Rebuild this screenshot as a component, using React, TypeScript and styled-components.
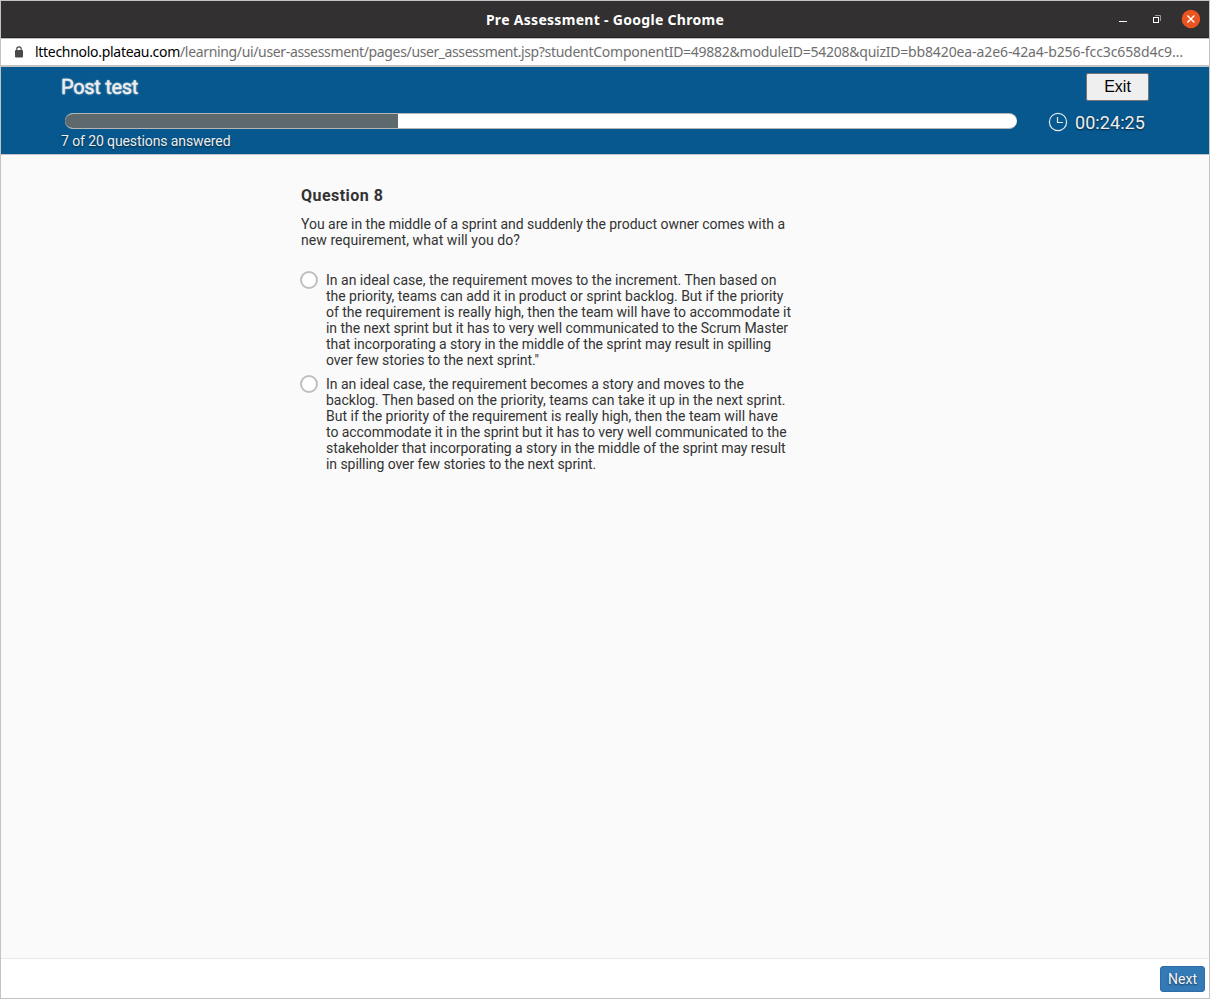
import React from "react";
import styled, { createGlobalStyle } from "styled-components";

const Global = createGlobalStyle`
  * { box-sizing: border-box; }
  body { margin: 0; background: #fff; }
`;

const Window = styled.div`
  display: flex;
  flex-direction: column;
  width: 1210px;
  height: 999px;
  border: 1px solid #c3c3c3;
  background: #fafafa;
  font-family: Roboto, "Liberation Sans", sans-serif;
  font-size: 14px;
  line-height: 16px;
  color: #333;
`;

const TitleBar = styled.div`
  display: grid;
  grid-template-columns: 1fr auto 1fr;
  align-items: center;
  height: 37px;
  flex: none;
  background: #323030;
  border-bottom: 1px solid #222;
`;

const WindowTitle = styled.div`
  grid-column: 2;
  color: #fff;
  font: bold 14px/20px "Noto Sans", sans-serif;
  letter-spacing: 0.3px;
  padding-top: 1px;
`;

const WindowButtons = styled.div`
  display: flex;
  justify-content: flex-end;
  align-items: center;
  padding-right: 9px;
`;

const AddressBar = styled.div`
  display: flex;
  align-items: center;
  height: 29px;
  flex: none;
  padding: 0 0 0 13px;
  background: #fff;
  border-top: 1px solid #c3c3c3;
  border-bottom: 2px solid #c3c3c3;
`;

const Url = styled.div`
  display: flex;
  margin-left: 11px;
  font: 14px/20px "Noto Sans", sans-serif;
  white-space: nowrap;
`;

const Host = styled.span`
  color: #000;
  letter-spacing: -0.296px;
`;

const Path = styled.span<{ $spacing: number }>`
  color: #6e6e6e;
  letter-spacing: ${(p) => p.$spacing}px;
`;

const Header = styled.header`
  display: flex;
  justify-content: space-between;
  height: 88px;
  flex: none;
  padding: 6px 60px 0;
  background: #07588e;
  border-bottom: 1px solid #c3c3c3;
  color: #eee;
`;

const Progress = styled.div`
  display: flex;
  flex-direction: column;
`;

const TestName = styled.h1`
  margin: 2px 0 0;
  font-size: 20px;
  font-weight: 400;
  line-height: 24px;
  letter-spacing: -0.31px;
  -webkit-text-stroke: 0.3px #eee;
  text-shadow: 0 0 2px rgba(255, 255, 255, 0.8);
`;

const Track = styled.div`
  width: 952px;
  height: 16px;
  margin: 14px 0 0 4px;
  overflow: hidden;
  border: solid #b5b5b5;
  border-width: 1px 0;
  border-radius: 8px;
  background: #fff;
`;

const Fill = styled.div`
  height: 16px;
  margin-top: -1px;
  background: #5e696e;
`;

const Answered = styled.div`
  margin-top: 4px;
  letter-spacing: -0.1px;
  text-shadow: 0 1px 2px rgba(0, 0, 0, 0.6);
`;

const Side = styled.div`
  display: flex;
  flex-direction: column;
  width: 101px;
`;

const ExitButton = styled.button`
  align-self: flex-end;
  width: 63px;
  height: 28px;
  padding: 0;
  border: 1px solid #767676;
  border-radius: 2px;
  background: #efefef;
  color: #000;
  font: 16px/24px "Liberation Sans", Arial, sans-serif;
`;

const Timer = styled.div`
  display: flex;
  align-items: center;
  gap: 7px;
  margin-top: 11px;
  font-size: 18px;
  line-height: 22px;
  letter-spacing: 0.07px;
  text-shadow: 0 1px 2px rgba(0, 0, 0, 0.6);

  svg {
    margin-top: -2px;
  }
`;

const Content = styled.main`
  flex: 1;
  padding: 31px 0 0 300px;
`;

const QuestionTitle = styled.h2`
  margin: 0 0 10px;
  font-size: 16px;
  font-weight: 700;
  line-height: 20px;
  letter-spacing: 0.47px;
`;

const Prompt = styled.div`
  margin-bottom: 24px;
`;

const Line = styled.div<{ $spacing: number }>`
  white-space: nowrap;
  letter-spacing: ${(p) => p.$spacing}px;
`;

const Option = styled.label`
  display: flex;
  gap: 8px;
  margin: 0 0 8px -1px;
`;

const Radio = styled.span`
  flex: none;
  width: 18px;
  height: 18px;
  margin-top: -1px;
  border: 2px solid #bfbfbf;
  border-radius: 50%;
  background: #fff;
`;

const Footer = styled.footer`
  display: flex;
  justify-content: flex-end;
  align-items: center;
  height: 40px;
  flex: none;
  padding-right: 4px;
  border-top: 1px solid #e7e7e7;
  background: #fff;
`;

const NextButton = styled.button`
  width: 45px;
  height: 26px;
  padding: 0;
  border: 1px solid #2e6da4;
  border-radius: 3px;
  background: #337ab7;
  color: #f5f5f5;
  font: 14px/22px Roboto, sans-serif;
  text-shadow: 0 1px 2px rgba(0, 0, 0, 0.6);
`;

type TextLine = [text: string, spacing: number];

const path: TextLine[] = [
  ["/learning/ui/user-assessment/pages/", -0.345],
  ["user_assessment.jsp?", -0.41],
  ["studentComponentID=49882&moduleID=54208&quizID=", -0.26],
  ["bb8420ea-a2e6-42a4-b256-fcc3c658d4c9…", -0.1],
];

const prompt: TextLine[] = [
  ["You are in the middle of a sprint and suddenly the product owner comes with a", -0.025],
  ["new requirement, what will you do?", 0.063],
];

const options: TextLine[][] = [
  [
    ["In an ideal case, the requirement moves to the increment. Then based on", 0.006],
    ["the priority, teams can add it in product or sprint backlog. But if the priority", -0.025],
    ["of the requirement is really high, then the team will have to accommodate it", -0.012],
    ["in the next sprint but it has to very well communicated to the Scrum Master", -0.041],
    ["that incorporating a story in the middle of the sprint may result in spilling", -0.054],
    ['over few stories to the next sprint."', -0.029],
  ],
  [
    ["In an ideal case, the requirement becomes a story and moves to the", -0.011],
    ["backlog. Then based on the priority, teams can take it up in the next sprint.", -0.006],
    ["But if the priority of the requirement is really high, then the team will have", 0.013],
    ["to accommodate it in the sprint but it has to very well communicated to the", -0.059],
    ["stakeholder that incorporating a story in the middle of the sprint may result", -0.048],
    ["in spilling over few stories to the next sprint.", -0.06],
  ],
];

const Lines = ({ lines }: { lines: TextLine[] }) => (
  <div>
    {lines.map(([text, spacing]) => (
      <Line key={text} $spacing={spacing}>{text}</Line>
    ))}
  </div>
);

const WindowControls = () => (
  <svg width="84" height="20" viewBox="0 0 84 20" fill="none">
    <path d="M3 12.5h8" stroke="#fff" />
    <path d="M39 6.5h5.5V12" stroke="#999" />
    <rect x="37.5" y="8.5" width="5" height="5" stroke="#fff" />
    <circle cx="74.9" cy="10" r="9.2" fill="#e95420" />
    <path d="m71.4 6.5 7 7m0-7-7 7" stroke="#fff" strokeWidth="1.4" />
  </svg>
);

const Lock = () => (
  <svg width="10" height="12" viewBox="0 0 10 12">
    <rect x="1" y="4" width="8" height="7.5" rx="1" fill="#4a4a4a" />
    <path d="M2.8 4.5V3a2.2 2.2 0 0 1 4.4 0v1.5" fill="none" stroke="#4a4a4a" strokeWidth="1.2" />
  </svg>
);

const Clock = () => (
  <svg width="20" height="20" viewBox="0 0 20 20" fill="none" stroke="#e4e9ed" strokeWidth="1.2">
    <circle cx="10" cy="10" r="8.6" />
    <path d="M9.5 5v5.5H15" />
  </svg>
);

export default function App() {
  const answered = 7;
  const total = 20;
  return (
    <Window>
      <Global />
      <TitleBar>
        <WindowTitle>Pre Assessment - Google Chrome</WindowTitle>
        <WindowButtons><WindowControls /></WindowButtons>
      </TitleBar>
      <AddressBar>
        <Lock />
        <Url>
          <Host>lttechnolo.plateau.com</Host>
          {path.map(([text, spacing]) => (
            <Path key={text} $spacing={spacing}>{text}</Path>
          ))}
        </Url>
      </AddressBar>
      <Header>
        <Progress>
          <TestName>Post test</TestName>
          <Track><Fill style={{ width: `${(answered / total) * 100}%` }} /></Track>
          <Answered>{`${answered} of ${total} questions answered`}</Answered>
        </Progress>
        <Side>
          <ExitButton>Exit</ExitButton>
          <Timer><Clock />00:24:25</Timer>
        </Side>
      </Header>
      <Content>
        <QuestionTitle>Question 8</QuestionTitle>
        <Prompt><Lines lines={prompt} /></Prompt>
        {options.map((lines, i) => (
          <Option key={i}>
            <Radio />
            <Lines lines={lines} />
          </Option>
        ))}
      </Content>
      <Footer><NextButton>Next</NextButton></Footer>
    </Window>
  );
}
